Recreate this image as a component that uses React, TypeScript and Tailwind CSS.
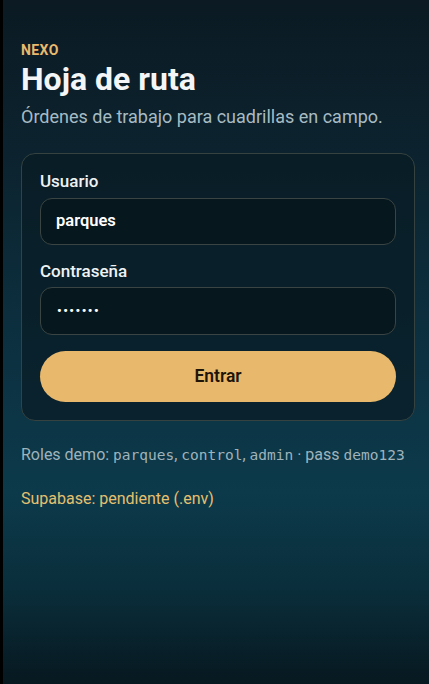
import React from "react";

const mono = { fontFamily: "'DejaVu Sans Mono', monospace" };

export default function App() {
  return (
    <div
      className="min-h-[684px] w-full border-l-[3px] border-black bg-[linear-gradient(180deg,#0b1a23_0%,#0c2430_25%,#0c3040_50%,#0c3a4b_72%,#0a2e3b_86%,#071820_100%)] pl-[18px] pr-[14px] pt-[41px] text-white"
      style={{ fontFamily: "Roboto, 'Noto Sans', sans-serif" }}
    >
      {/* Header */}
      <p className="text-[14px] leading-[19px] font-bold tracking-[0.03em] text-[#e9b96d]">NEXO</p>
      <h1 className="text-[32px] leading-[38px] font-bold text-[#f3f5f6]">Hoja de ruta</h1>
      <p className="mt-[6px] text-[18px] leading-[26px] text-[#a7bbc3]">
        Órdenes de trabajo para cuadrillas en campo.
      </p>

      {/* Login card */}
      <form className="mt-[23px] rounded-[14px] border border-[#35423f] bg-[#081b23]/70 px-[18px] pt-[15px] pb-[18px]">
        <label className="block text-[17px] leading-[24px] font-medium text-[#eef2f3]">Usuario</label>
        <div className="mt-[5px] flex h-[47px] items-center rounded-[12px] border border-[#3a4543] bg-[#07171e] px-[15px]">
          <span className="text-[16.5px] font-semibold text-white">parques</span>
        </div>

        <label className="mt-[14px] block text-[17px] leading-[24px] font-medium text-[#eef2f3]">Contraseña</label>
        <div className="mt-[4px] flex h-[48px] items-center rounded-[12px] border border-[#3a4543] bg-[#07171e] px-[16px]">
          <span className="text-[13px] font-bold tracking-[1.5px] text-white">•••••••</span>
        </div>

        <button
          type="button"
          className="mt-[16px] flex h-[51px] w-full items-center justify-center rounded-full bg-[#e8b86c] text-[17.5px] font-semibold text-[#1d1509]"
        >
          Entrar
        </button>
      </form>

      {/* Footer notes */}
      <p className="mt-[22px] text-[16px] leading-[23px] text-[#9fb3bb]">
        Roles demo:{" "}
        <span className="text-[14.5px]" style={mono}>parques</span>,{" "}
        <span className="text-[14.5px]" style={mono}>control</span>,{" "}
        <span className="text-[14.5px]" style={mono}>admin</span> · pass{" "}
        <span className="text-[14.5px]" style={mono}>demo123</span>
      </p>
      <p className="mt-[20px] text-[16px] leading-[23px] text-[#e6c06e]">Supabase: pendiente (.env)</p>
    </div>
  );
}
